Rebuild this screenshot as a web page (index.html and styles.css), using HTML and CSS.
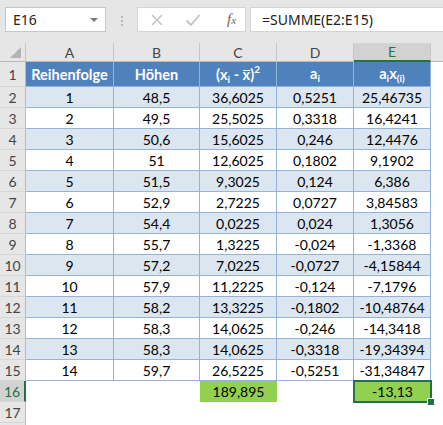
FILE: index.html
```html
<!DOCTYPE html>
<html lang="de">
  <head>
    <meta charset="UTF-8" />
    <title>E16 – SUMME</title>
    <link rel="stylesheet" href="styles.css">
  </head>
  <body>
    <div class="toolbar">
      <div class="namebox">
        <span>E16</span>
        <span class="drop"></span>
      </div>
      <div class="grip"><i></i><i></i><i></i></div>
      <div class="fxbox">
        <svg class="tool-icon" width="14" height="14" viewBox="0 0 14 14">
          <path d="M2 2 L12 12 M12 2 L2 12" stroke="#c3c3c3" stroke-width="1.6" fill="none" />
        </svg>
        <svg class="tool-icon" width="16" height="14" viewBox="0 0 16 14">
          <path d="M1.5 7.5 L6 12 L14.5 2" stroke="#c3c3c3" stroke-width="1.8" fill="none" />
        </svg>
        <span class="fx">f<sub>x</sub></span>
      </div>
      <div class="formula">=SUMME(E2:E15)</div>
    </div>

    <div class="sheet">
      <div class="corner"></div>
      <div class="col-head">A</div>
      <div class="col-head">B</div>
      <div class="col-head">C</div>
      <div class="col-head">D</div>
      <div class="col-head selected">E</div>
      <div class="col-head rest"></div>

      <div class="row-head">1</div>
      <div class="cell th">Reihenfolge</div>
      <div class="cell th">Höhen</div>
      <div class="cell th"><span>(x<sub>i</sub> - <span class="bar">x</span>)<sup>2</sup></span></div>
      <div class="cell th"><span>a<sub>i</sub></span></div>
      <div class="cell th"><span>a<sub>i</sub>x<sub>(i)</sub></span></div>
      <div class="empty"></div>

      <div class="row-head">2</div>
      <div class="cell band">1</div><div class="cell band">48,5</div><div class="cell band">36,6025</div><div class="cell band">0,5251</div><div class="cell band">25,46735</div>
      <div class="empty"></div>

      <div class="row-head">3</div>
      <div class="cell">2</div><div class="cell">49,5</div><div class="cell">25,5025</div><div class="cell">0,3318</div><div class="cell">16,4241</div>
      <div class="empty"></div>

      <div class="row-head">4</div>
      <div class="cell band">3</div><div class="cell band">50,6</div><div class="cell band">15,6025</div><div class="cell band">0,246</div><div class="cell band">12,4476</div>
      <div class="empty"></div>

      <div class="row-head">5</div>
      <div class="cell">4</div><div class="cell">51</div><div class="cell">12,6025</div><div class="cell">0,1802</div><div class="cell">9,1902</div>
      <div class="empty"></div>

      <div class="row-head">6</div>
      <div class="cell band">5</div><div class="cell band">51,5</div><div class="cell band">9,3025</div><div class="cell band">0,124</div><div class="cell band">6,386</div>
      <div class="empty"></div>

      <div class="row-head">7</div>
      <div class="cell">6</div><div class="cell">52,9</div><div class="cell">2,7225</div><div class="cell">0,0727</div><div class="cell">3,84583</div>
      <div class="empty"></div>

      <div class="row-head">8</div>
      <div class="cell band">7</div><div class="cell band">54,4</div><div class="cell band">0,0225</div><div class="cell band">0,024</div><div class="cell band">1,3056</div>
      <div class="empty"></div>

      <div class="row-head">9</div>
      <div class="cell">8</div><div class="cell">55,7</div><div class="cell">1,3225</div><div class="cell">-0,024</div><div class="cell">-1,3368</div>
      <div class="empty"></div>

      <div class="row-head">10</div>
      <div class="cell band">9</div><div class="cell band">57,2</div><div class="cell band">7,0225</div><div class="cell band">-0,0727</div><div class="cell band">-4,15844</div>
      <div class="empty"></div>

      <div class="row-head">11</div>
      <div class="cell">10</div><div class="cell">57,9</div><div class="cell">11,2225</div><div class="cell">-0,124</div><div class="cell">-7,1796</div>
      <div class="empty"></div>

      <div class="row-head">12</div>
      <div class="cell band">11</div><div class="cell band">58,2</div><div class="cell band">13,3225</div><div class="cell band">-0,1802</div><div class="cell band">-10,48764</div>
      <div class="empty"></div>

      <div class="row-head">13</div>
      <div class="cell">12</div><div class="cell">58,3</div><div class="cell">14,0625</div><div class="cell">-0,246</div><div class="cell">-14,3418</div>
      <div class="empty"></div>

      <div class="row-head">14</div>
      <div class="cell band">13</div><div class="cell band">58,3</div><div class="cell band">14,0625</div><div class="cell band">-0,3318</div><div class="cell band">-19,34394</div>
      <div class="empty"></div>

      <div class="row-head">15</div>
      <div class="cell">14</div><div class="cell">59,7</div><div class="cell">26,5225</div><div class="cell">-0,5251</div><div class="cell">-31,34847</div>
      <div class="empty"></div>

      <div class="row-head selected">16</div>
      <div class="empty"></div><div class="empty"></div><div class="plain green">189,895</div><div class="empty"></div><div class="plain green active">-13,13</div>
      <div class="empty"></div>

      <div class="row-head">17</div>
      <div class="empty"></div><div class="empty"></div><div class="empty"></div><div class="empty"></div><div class="empty"></div>
      <div class="empty"></div>

      <div class="row-head"></div>
    </div>
  </body>
</html>
```

FILE: styles.css
```css
* {
  box-sizing: border-box;
}

body {
  margin: 0;
  background: #fff;
  font-family: Lato, "Liberation Sans", sans-serif;
  overflow: hidden;
}

/* formula bar */
.toolbar {
  display: flex;
  align-items: flex-start;
  height: 43px;
  padding: 7px 0 0 5px;
  background: #e6e6e6;
}

.namebox {
  display: flex;
  align-items: center;
  justify-content: space-between;
  width: 101px;
  height: 25px;
  padding: 0 7px 0 7px;
  background: #fff;
  border: 1px solid #c6c6c6;
  font-family: "Noto Sans", sans-serif;
  font-size: 14px;
  color: #222;
}

.drop {
  width: 0;
  height: 0;
  border-left: 4px solid transparent;
  border-right: 4px solid transparent;
  border-top: 4px solid #7a7a7a;
}

.grip {
  display: flex;
  flex-direction: column;
  align-items: center;
  gap: 2px;
  width: 31px;
  padding-top: 9px;
}

.grip i {
  width: 2px;
  height: 2px;
  background: #b8b8b8;
}

.fxbox {
  display: flex;
  align-items: center;
  width: 109px;
  height: 25px;
  padding-left: 12px;
  gap: 21px;
  background: #fff;
  border: 1px solid #d4d4d4;
}

.fx {
  margin-left: 5px;
  font-family: "Liberation Serif", serif;
  font-style: italic;
  font-size: 15px;
  color: #666;
}

.fx sub {
  font-size: 11px;
  vertical-align: 0;
}

.formula {
  flex: 1;
  height: 25px;
  margin-left: 4px;
  padding-left: 11px;
  background: #fff;
  border: 1px solid #d4d4d4;
  border-right: none;
  font-family: "Noto Sans", sans-serif;
  font-size: 14px;
  line-height: 23px;
  color: #222;
}

/* grid */
.sheet {
  display: grid;
  grid-template-columns: 26px 88px 86px 77px 77px 77px 1fr;
  grid-template-rows: 19px 25px;
  grid-auto-rows: 21px;
  font-size: 14px;
  color: #000;
}

.corner {
  position: relative;
  background: #e6e6e6;
  border-right: 1px solid #c6c6c6;
  border-bottom: 1px solid #bababa;
}

.corner::after {
  content: "";
  position: absolute;
  right: 4px;
  bottom: 3px;
  border-left: 11px solid transparent;
  border-bottom: 11px solid #b4b4b4;
}

.col-head {
  display: flex;
  align-items: center;
  justify-content: center;
  background: #e6e6e6;
  border-right: 1px solid #c6c6c6;
  border-bottom: 1px solid #bababa;
  color: #444;
}

.col-head.selected {
  background: #d2d2d2;
  border-bottom: 2px solid #217346;
  color: #217346;
}

.col-head.rest {
  border-right: none;
}

.row-head {
  display: flex;
  align-items: center;
  justify-content: center;
  background: #e6e6e6;
  border-right: 1px solid #bababa;
  border-bottom: 1px solid #d6d6d6;
  color: #444;
}

.row-head.selected {
  background: #d2d2d2;
  border-right: 2px solid #217346;
  color: #217346;
}

.cell,
.plain {
  display: flex;
  align-items: center;
  justify-content: center;
  white-space: nowrap;
}

.cell {
  border-right: 1px solid #95b3d7;
  border-bottom: 1px solid #95b3d7;
}

.cell.band {
  background: #dce6f1;
}

.cell.th {
  background: #4f81bd;
  color: #fff;
  font-weight: bold;
  font-size: 14.5px;
}

.th sub {
  font-size: 10px;
  vertical-align: -3px;
}

.th sup {
  font-size: 10px;
  vertical-align: 7px;
}

/* x with a bar, as in the mean */
.bar {
  display: inline-block;
  line-height: 5px;
  padding-top: 1px;
  border-top: 1.5px solid #fff;
}

.green {
  background: #92d050;
}

.active {
  position: relative;
  outline: 2px solid #217346;
  outline-offset: -1px;
}

.active::after {
  content: "";
  position: absolute;
  right: -4px;
  bottom: -4px;
  width: 6px;
  height: 6px;
  background: #217346;
  border: 1px solid #fff;
}
```
